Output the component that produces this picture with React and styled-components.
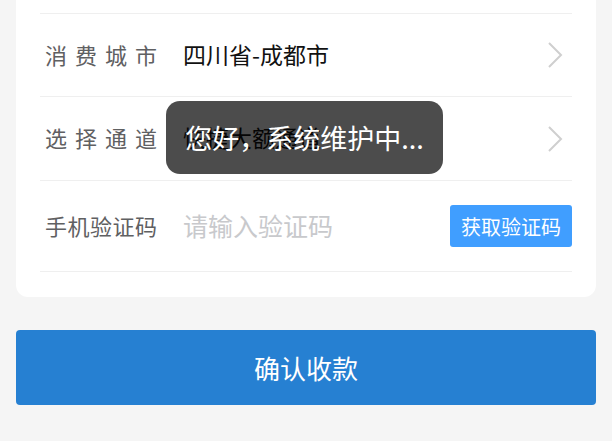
import React from "react";
import styled, { createGlobalStyle } from "styled-components";

const GlobalStyle = createGlobalStyle`
  html, body {
    margin: 0;
    padding: 0;
    background: #f5f5f5;
    font-family: "Noto Sans CJK SC", "Noto Sans", sans-serif;
  }
`;

const Page = styled.div`
  position: relative;
  width: 612px;
  height: 441px;
  overflow: hidden;
  background: #f5f5f5;
`;

const Card = styled.div`
  margin: 0 16px;
  padding: 0 24px 25px;
  background: #fff;
  border-radius: 0 0 12px 12px;
`;

const Row = styled.div`
  display: flex;
  align-items: center;
  height: ${p => p.h || 83}px;
  padding: 0 0 0 5px;
  border-bottom: 1px solid #efefef;
`;

const Label = styled.div`
  width: 112px;
  flex-shrink: 0;
  margin-right: 26px;
  margin-top: -3px;
  font-size: 22px;
  color: #5f6062;
  text-align: justify;
  text-align-last: justify;
`;

const Value = styled.div`
  flex: 1;
  margin-top: -3px;
  font-size: ${p => (p.placeholder ? 25 : 23)}px;
  color: ${p => (p.placeholder ? "#c8c9cc" : "#111")};
`;

const Chevron = styled.svg`
  width: 16px;
  height: 28px;
  margin-right: 9px;
  flex-shrink: 0;
`;

const CodeButton = styled.button`
  width: 122px;
  height: 42px;
  border: 0;
  border-radius: 3px;
  background: #409eff;
  color: #fff;
  font-family: inherit;
  font-size: 20px;
  padding: 0;
`;

const Confirm = styled.button`
  display: block;
  width: 580px;
  height: 75px;
  margin: 33px 16px 0;
  border: 0;
  border-radius: 4px;
  background: #2680d2;
  color: #fff;
  font-family: inherit;
  font-size: 26px;
`;

const Toast = styled.div`
  position: absolute;
  top: 101px;
  left: 166px;
  width: 277px;
  height: 73px;
  display: flex;
  align-items: center;
  justify-content: center;
  box-sizing: border-box;
  border-radius: 14px;
  background: rgba(0, 0, 0, 0.7);
  color: #fff;
  font-size: 27px;
  white-space: nowrap;
`;

const Arrow = () => (
  <Chevron viewBox="0 0 16 28">
    <path d="M2 2 L14 14 L2 26" fill="none" stroke="#cfcfcf" strokeWidth="2" />
  </Chevron>
);

export default function App() {
  return (
    <Page>
      <GlobalStyle />
      <Card>
        {/* bottom edge of the row scrolled above the view */}
        <Row h={13} />
        <Row h={82}>
          <Label>消费城市</Label>
          <Value>四川省-成都市</Value>
          <Arrow />
        </Row>
        <Row h={83}>
          <Label>选择通道</Label>
          <Value>快捷大额通道</Value>
          <Arrow />
        </Row>
        <Row h={90}>
          <Label>手机验证码</Label>
          <Value placeholder="1">请输入验证码</Value>
          <CodeButton>获取验证码</CodeButton>
        </Row>
      </Card>
      <Confirm>确认收款</Confirm>
      <Toast>您好，系统维护中...</Toast>
    </Page>
  );
}
